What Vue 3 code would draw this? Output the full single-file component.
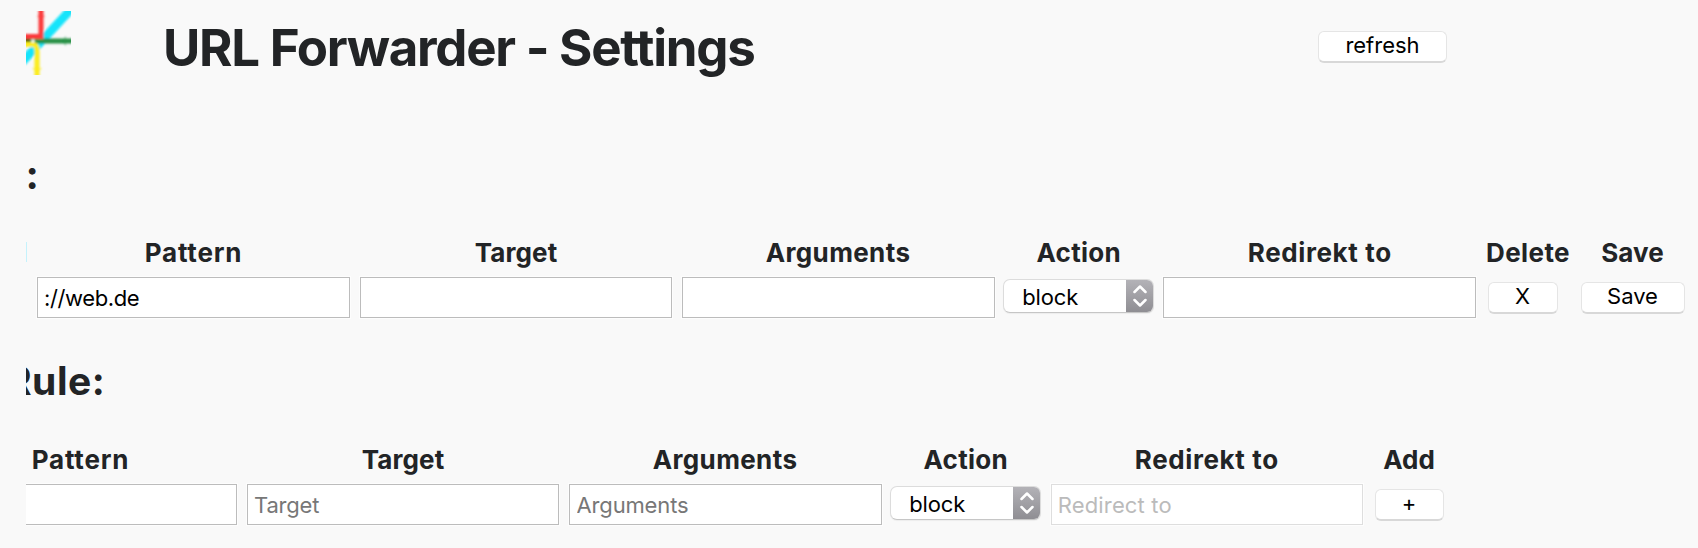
<script setup>
import { ref } from 'vue'

const columns = {
  pattern: { label: 'Pattern', tracking: 0.8 },
  target: { label: 'Target', tracking: 0.1 },
  args: { label: 'Arguments', tracking: 0.38 },
  action: { label: 'Action', tracking: 0.28 },
  redirect: { label: 'Redirekt to', tracking: 0.62 },
  del: { label: 'Delete', tracking: 0.4 },
  save: { label: 'Save', tracking: 0 },
  add: { label: 'Add', tracking: 0 }
}

const ruleHeads = ['pattern', 'target', 'args', 'action', 'redirect', 'del', 'save'].map(k => columns[k])
const newHeads = ['pattern', 'target', 'args', 'action', 'redirect', 'add'].map(k => columns[k])

const rule = ref({ pattern: '://web.de', target: '', args: '', redirect: '' })
const draft = ref({ pattern: '', target: '', args: '', redirect: '' })
</script>

<template>
  <main class="page">
    <header class="top">
      <svg class="logo" width="45" height="64" viewBox="0 0 45 64">
        <defs>
          <filter id="soft" x="-10%" y="-10%" width="120%" height="120%">
            <feGaussianBlur stdDeviation="0.9" />
          </filter>
        </defs>
        <g filter="url(#soft)" fill="none">
          <path d="M-4 51 L48 -5" stroke="#12e4fb" stroke-width="8.5" />
          <path d="M-4 30 H50" stroke="#259044" stroke-width="5" />
          <path d="M36 30 l4 -5 v10z" fill="#259044" opacity=".5" />
          <path d="M-4 30 H4" stroke="#2c5d10" stroke-width="4" />
          <path d="M-4 25.5 H15 V-4" stroke="#fb383b" stroke-width="5" />
          <path d="M10.5 6 h9 l-4.500 -4z" fill="#fb383b" opacity=".6" />
          <path d="M-4 33.500 H7 Q11 34 11 39 V68" stroke="#fcec1c" stroke-width="5" />
          <path d="M6 57 h10 l-5 5z" fill="#fcec1c" opacity=".7" />
          <circle cx="7" cy="30" r="1.700" fill="#fff" />
        </g>
      </svg>
      <h1>URL Forwarder - Settings</h1>
      <button class="btn refresh">refresh</button>
    </header>

    <h2 class="rules-title">:</h2>
    <section class="grid rules">
      <span v-for="h in ruleHeads" :key="h.label" class="head" :style="{ letterSpacing: h.tracking + 'px' }">{{ h.label }}</span>
      <input v-model="rule.pattern" class="field url">
      <input v-model="rule.target" class="field short">
      <input v-model="rule.args" class="field">
      <div class="select">
        <span>block</span>
        <i><svg width="14" height="22" viewBox="0 0 14 22"><path d="M1.500 7 7 1.500l5.500 5.500M1.500 15l5.500 5.500 5.500-5.500" /></svg></i>
      </div>
      <input v-model="rule.redirect" class="field">
      <button class="btn small delete">X</button>
      <button class="btn save">Save</button>
    </section>

    <h2 class="new-title"><span>Rule:</span></h2>
    <section class="grid new">
      <span v-for="h in newHeads" :key="h.label" class="head" :style="{ letterSpacing: h.tracking + 'px' }">{{ h.label }}</span>
      <input v-model="draft.pattern" class="field">
      <input v-model="draft.target" class="field short target" placeholder="Target">
      <input v-model="draft.args" class="field args" placeholder="Arguments">
      <div class="select">
        <span>block</span>
        <i><svg width="14" height="22" viewBox="0 0 14 22"><path d="M1.500 7 7 1.500l5.500 5.500M1.500 15l5.500 5.500 5.500-5.500" /></svg></i>
      </div>
      <input v-model="draft.redirect" class="field short redirect" placeholder="Redirect to" disabled>
      <button class="btn small add">+</button>
    </section>
  </main>
</template>

<style>
body { background: #f9f9f9; }
</style>

<style scoped>
.page {
  box-sizing: border-box;
  height: 548px;
  margin-left: 26px;
  overflow: hidden;
  color: #222426;
  background: #f9f9f9;
  font-family: Inter, "Liberation Sans", sans-serif;
}
.top {
  display: flex;
  align-items: flex-start;
  height: 151px;
  padding-top: 11px;
  box-sizing: border-box;
}
.logo { flex: none; }
h1, h2 { margin: 0; font-weight: 700; white-space: nowrap; }
h1 {
  width: 1155px;
  margin-left: 92px;
  margin-top: 7px;
  font-size: 51px;
  line-height: 60px;
  letter-spacing: -1.27px;
}
h2 {
  height: 48px;
  font-size: 39px;
  line-height: 48px;
  letter-spacing: .5px;
}
.rules-title { font-size: 40px; text-indent: -.5px; }
.new-title {
  display: flex;
  margin-top: 39px;
}
.new-title span { margin-left: -20px; }

.grid { display: grid; justify-items: center; }
.rules {
  position: relative;
  grid-template-columns: 323px 322px 322px 159.5px 322.5px 94px 115px;
  margin-left: 6px;
  margin-top: 37px;
}
/* edge of the column scrolled out on the left */
.rules::before {
  content: "";
  position: absolute;
  left: -6px;
  top: 6px;
  width: 1px;
  height: 20px;
  background: #c5f2fc;
}
.new {
  grid-template-columns: 323px 322px 322px 159.5px 322.5px 82px;
  margin-left: -107px;
  margin-top: 38px;
}
.head {
  height: 41px;
  font-size: 26px;
  font-weight: 700;
  line-height: 33px;
  white-space: nowrap;
}
.field {
  box-sizing: border-box;
  width: 313px;
  height: 41px;
  margin: 0;
  padding: 1px 6px 0;
  border: 1px solid #bcbcbc;
  border-radius: 0;
  outline: 0;
  background: #fff;
  box-shadow: 0 0 0 1px #fdfdfd;
  color: #000;
  font: 22px Inter, "Liberation Sans", sans-serif;
}
.field.short { width: 312px; }
.field::placeholder { color: #777; opacity: 1; }
.field.url { letter-spacing: -.4px; }
.field.target { letter-spacing: -.2px; }
.field.args { padding-left: 7px; letter-spacing: -.15px; }
.field.redirect { border-color: #dedede; letter-spacing: .15px; }
.field.redirect::placeholder { color: #bbb; }

.select {
  display: flex;
  justify-content: space-between;
  box-sizing: border-box;
  width: 151px;
  height: 34px;
  margin-top: 2px;
  overflow: hidden;
  border: 1px solid #dcdcdc;
  border-bottom-color: #c6c6c6;
  border-radius: 7px;
  background: #fff;
  box-shadow: 0 1px 1px #0000000d;
  color: #000;
  font-size: 22px;
  line-height: 34px;
}
.select span { margin-left: 18px; letter-spacing: -.15px; }
.select i {
  display: flex;
  align-items: center;
  justify-content: center;
  width: 28px;
  height: 34px;
  margin: -1px -1px 0 0;
  background: linear-gradient(#b4b3b8, #8e8d92);
}
.select path {
  fill: none;
  stroke: #fff;
  stroke-width: 2.500;
  stroke-linecap: round;
  stroke-linejoin: round;
}
.btn {
  box-sizing: border-box;
  height: 32px;
  margin: 0;
  padding: 0 0 2px;
  border: 1px solid #e5e5e5;
  border-bottom: 2px solid #d8d8d8;
  border-radius: 6px;
  background: #fff;
  color: #000;
  font: 22px/27px Inter, "Liberation Sans", sans-serif;
}
.refresh { flex: none; width: 129px; margin-top: 20px; }
.small { width: 70px; margin-top: 5px; }
.save { width: 104px; margin-top: 5px; }
.delete { justify-self: start; margin-left: 6.5px; }
.add { width: 69px; }
</style>
